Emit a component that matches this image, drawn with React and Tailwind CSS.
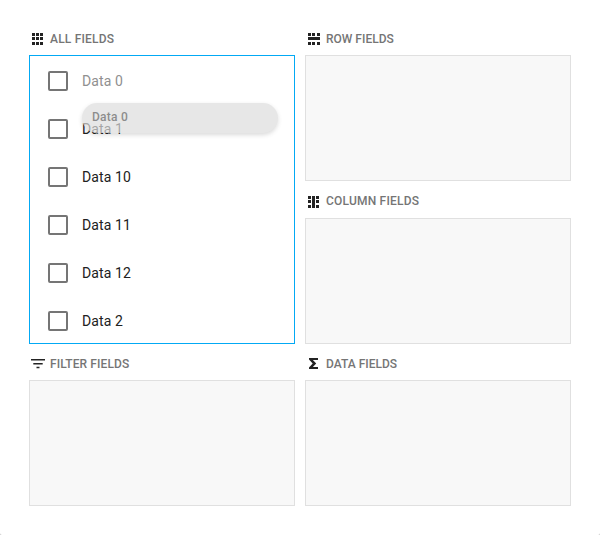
const STEPS = [0, 4, 9];

function AllIcon() {
  return (
    <svg className="h-3 w-3" viewBox="0 0 12 12" fill="#232323" shapeRendering="crispEdges">
      {[0, 4, 8].map((x) => STEPS.map((y) => <rect key={`${x}-${y}`} x={x} y={y} width="3" height="3" />))}
    </svg>
  );
}

function RowIcon() {
  return (
    <svg className="h-3 w-3" viewBox="0 0 12 12" fill="#232323" shapeRendering="crispEdges">
      {STEPS.map((x) => [0, 9].map((y) => <rect key={`${x}-${y}`} x={x} y={y} width="3" height="3" />))}
      <rect x="0" y="4" width="12" height="3" />
    </svg>
  );
}

function ColumnIcon() {
  return (
    <svg className="h-3 w-3" viewBox="0 0 12 12" fill="#232323" shapeRendering="crispEdges">
      {[0, 8].map((x) => STEPS.map((y) => <rect key={`${x}-${y}`} x={x} y={y} width="3" height="3" />))}
      <rect x="4" y="0" width="3" height="12" />
    </svg>
  );
}

function FilterIcon() {
  return (
    <svg className="h-3 w-3.5" viewBox="0 0 14 12" fill="#232323">
      <path d="M0 1h14v1.5H0zM2.3 4.9h9.4v1.5H2.3zM5.5 8.8h3v1.5h-3z" />
    </svg>
  );
}

function DataIcon() {
  return (
    <svg className="h-3 w-3" viewBox="0 0 12 12" fill="#232323">
      <path d="M1 0h9v2H4.9L8.2 5.5L4.9 9H10v2H1V9.4L4.7 5.5L1 1.6z" />
    </svg>
  );
}

function Area({ icon, title, iconClass = "pl-[3px]", headClass = "h-9 pt-1", children }) {
  return (
    <section className="flex flex-col">
      <h2 className={`flex items-center text-xs font-medium text-[#757575] ${headClass}`}>
        <span className={`flex w-[21px] shrink-0 ${iconClass}`}>{icon}</span>
        <span className="whitespace-nowrap">{title}</span>
      </h2>
      {children || <div className="h-[126px] border border-[#e0e0e0] bg-[#f8f8f8]" />}
    </section>
  );
}

const FIELDS = ["Data 0", "Data 1", "Data 10", "Data 11", "Data 12", "Data 2"];

export default function App() {
  return (
    <div className="h-[535px] w-[600px] bg-[#c4c4c4] font-[Roboto,sans-serif]">
      <main className="grid h-full grid-cols-[266px_266px] content-start gap-x-2.5 rounded-b-xs bg-white pt-[19px] pl-[29px]">
        <Area icon={<AllIcon />} title="ALL FIELDS" headClass="h-9 pt-1 tracking-[0.2px]">
          <div className="relative h-[289px] border border-[#03a9f4] pl-[18px]">
            <ul className="pt-px">
              {FIELDS.map((name, i) => (
                <li key={name} className="flex h-12 items-center gap-3.5 text-sm tracking-[0.12px]">
                  <span className="h-5 w-5 rounded-xs border-2 border-[#757575]" />
                  <span className={i === 0 ? "text-[#909090]" : "text-[#212121]"}>{name}</span>
                </li>
              ))}
            </ul>
            <div className="absolute top-[47px] left-[52px] h-[30px] w-[196px] rounded-[15px] bg-[#dedede] pt-1.5 pl-2.5 text-xs font-medium tracking-[0.25px] text-[#5c5c5c] opacity-70 shadow-[0_2px_4px_rgba(0,0,0,0.2)]">
              Data 0
            </div>
          </div>
        </Area>
        <div>
          <Area icon={<RowIcon />} title="ROW FIELDS" />
          <Area
            icon={<ColumnIcon />}
            title="COLUMN FIELDS"
            iconClass="pl-[3px] pt-[3px]"
            headClass="h-[37px] pt-0.5 tracking-[0.2px]"
          />
        </div>
        <Area icon={<FilterIcon />} title="FILTER FIELDS" iconClass="pl-0.5" headClass="h-9 pt-1 tracking-[0.1px]" />
        <Area icon={<DataIcon />} title="DATA FIELDS" />
      </main>
    </div>
  );
}
